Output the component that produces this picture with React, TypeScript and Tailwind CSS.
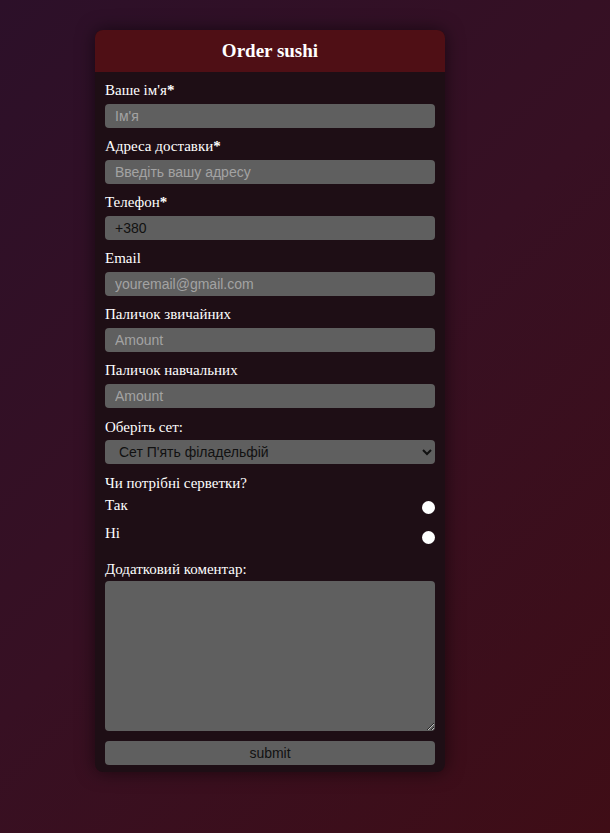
import { useState } from "react";

const inputClass =
  "block h-[24px] w-full rounded-[4px] border-0 bg-[#5f5f5f] px-[10px] font-['Liberation_Sans',Arial,sans-serif] text-[14px] text-[#111] outline-none placeholder:text-[#a3a3a3]";

function Field({
  label,
  required,
  children,
}: {
  label: string;
  required?: boolean;
  children: React.ReactNode;
}) {
  return (
    <div className="mb-[8px]">
      <label className="mb-[4px] block h-[20px] text-[15px] leading-[20px] text-white">
        {label}
        {required ? <b>*</b> : null}
      </label>
      {children}
    </div>
  );
}

export default function App() {
  const [napkins, setNapkins] = useState("");

  return (
    <main className="min-h-screen bg-[linear-gradient(135deg,#2c1029_0%,#371023_50%,#3f0d16_100%)] pb-[60px] pt-[30px] font-['Liberation_Serif','Times_New_Roman',serif]">
      <form
        className="ml-[95px] w-[350px] overflow-hidden rounded-[8px] bg-[#1e0e15] shadow-[0_0_18px_rgba(0,0,0,0.55)]"
        onSubmit={(e) => e.preventDefault()}
      >
        <div className="flex h-[42px] items-center justify-center bg-[#4f0f15]">
          <h1 className="text-[19px] font-bold text-white">Order sushi</h1>
        </div>

        <div className="px-[10px] pb-[7px] pt-[8px]">
          <Field label="Ваше ім'я" required>
            <input className={inputClass} placeholder="Ім'я" />
          </Field>
          <Field label="Адреса доставки" required>
            <input className={inputClass} placeholder="Введіть вашу адресу" />
          </Field>
          <Field label="Телефон" required>
            <input className={inputClass} defaultValue="+380" />
          </Field>
          <Field label="Email">
            <input className={inputClass} placeholder="youremail@gmail.com" />
          </Field>
          <Field label="Паличок звичайних">
            <input className={inputClass} placeholder="Amount" />
          </Field>
          <Field label="Паличок навчальних">
            <input className={inputClass} placeholder="Amount" />
          </Field>

          <div className="mb-[9px] pt-[1px]">
            <label className="mb-[3px] block h-[20px] text-[15px] leading-[20px] text-white">
              Оберіть сет:
            </label>
            <select className="block h-[24px] w-full rounded-[4px] border-0 bg-[#5f5f5f] px-[10px] font-['Liberation_Sans',Arial,sans-serif] text-[14px] text-[#111] outline-none">
              <option>Сет П'ять філадельфій</option>
              <option>Сет Каліфорнія</option>
              <option>Сет Дракон</option>
            </select>
          </div>

          <p className="h-[20px] text-[15px] leading-[20px] text-white">
            Чи потрібні серветки?
          </p>
          <div className="mt-[2px]">
            {["Так", "Ні"].map((opt, i) => (
              <label
                key={opt}
                className="flex h-[28px] items-start justify-between text-[15px] leading-[20px] text-white"
              >
                <span>{opt}</span>
                <input
                  type="radio"
                  name="napkins"
                  checked={napkins === opt}
                  onChange={() => setNapkins(opt)}
                  className={`h-[13px] w-[13px] appearance-none rounded-full bg-white ${
                    i === 0 ? "mt-[6px]" : "mt-[8px]"
                  }`}
                />
              </label>
            ))}
          </div>

          <div className="mt-[8px]">
            <label className="mb-[2px] block h-[20px] text-[15px] leading-[20px] text-white">
              Додатковий коментар:
            </label>
            <textarea className="block h-[150px] w-full rounded-[4px] border-0 bg-[#5f5f5f] px-[10px] py-[4px] font-['Liberation_Sans',Arial,sans-serif] text-[14px] text-[#111] outline-none" />
          </div>

          <button
            type="submit"
            className="mt-[10px] block h-[24px] w-full rounded-[4px] bg-[#5f5f5f] font-['Liberation_Sans',Arial,sans-serif] text-[14px] text-[#111]"
          >
            submit
          </button>
        </div>
      </form>
    </main>
  );
}
